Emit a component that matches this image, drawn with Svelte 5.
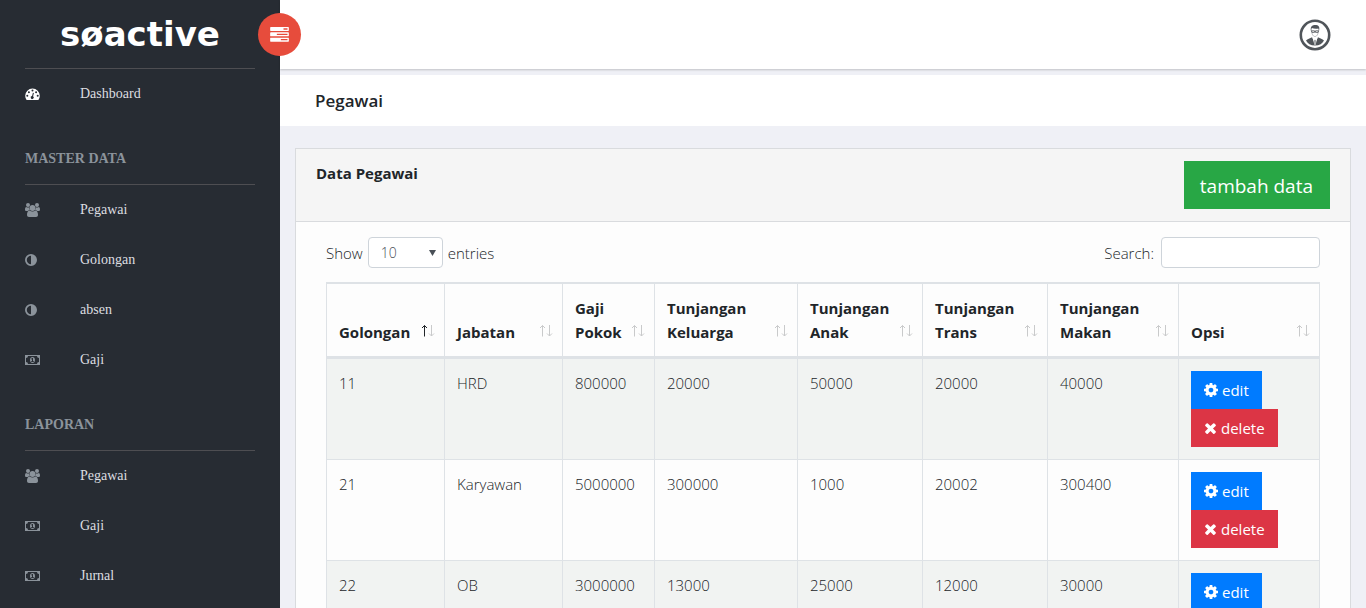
<script>
  const cog =
    'M1152 896q0-106-75-181t-181-75-181 75-75 181 75 181 181 75 181-75 75-181zm512-109v222q0 12-8 23t-20 13l-185 28q-19 54-39 91 35 50 107 138 10 12 10 25t-9 23q-27 37-99 108t-94 71q-12 0-26-9l-138-108q-44 23-91 38-16 136-29 186-7 28-36 28h-222q-14 0-24.5-8.5t-11.5-21.5l-28-184q-49-16-90-37l-141 107q-10 9-25 9-14 0-25-11-126-114-165-168-7-10-7-23 0-12 8-23 15-21 51-66.5t54-70.5q-27-50-41-99l-183-27q-13-2-21-12.5t-8-23.5v-222q0-12 8-23t19-13l186-28q14-46 39-92-40-57-107-138-10-12-10-24 0-10 9-23 26-36 98.5-107.5t94.5-71.5q13 0 26 10l138 107q44-23 91-38 16-136 29-186 7-28 36-28h222q14 0 24.5 8.5t11.5 21.5l28 184q49 16 90 37l142-107q9-9 24-9 13 0 25 10 129 119 165 170 7 8 7 22 0 12-8 23-15 21-51 66.5t-54 70.5q26 50 41 98l183 28q13 2 21 12.5t8 23.5z';
  const times =
    'M1490 1322q0 40-28 68l-136 136q-28 28-68 28t-68-28l-294-294-294 294q-28 28-68 28t-68-28l-136-136q-28-28-28-68t28-68l294-294-294-294q-28-28-28-68t28-68l136-136q28-28 68-28t68 28l294 294 294-294q28-28 68-28t68 28l136 136q28 28 28 68t-28 68l-294 294 294 294q28 28 28 68z';
  const tasks =
    'M1024 1408h640v-128h-640v128zm-384-512h1024v-128h-1024v128zm640-512h384v-128h-384v128zm512 832v256q0 26-19 45t-45 19h-1664q-26 0-45-19t-19-45v-256q0-26 19-45t45-19h1664q26 0 45 19t19 45zm0-512v256q0 26-19 45t-45 19h-1664q-26 0-45-19t-19-45v-256q0-26 19-45t45-19h1664q26 0 45 19t19 45zm0-512v256q0 26-19 45t-45 19h-1664q-26 0-45-19t-19-45v-256q0-26 19-45t45-19h1664q26 0 45 19t19 45z';

  const sections = [
    { title: '', items: [{ icon: 'gauge', label: 'Dashboard' }] },
    {
      title: 'MASTER DATA',
      items: [
        { icon: 'users', label: 'Pegawai' },
        { icon: 'adjust', label: 'Golongan' },
        { icon: 'adjust', label: 'absen' },
        { icon: 'money', label: 'Gaji' }
      ]
    },
    {
      title: 'LAPORAN',
      items: [
        { icon: 'users', label: 'Pegawai' },
        { icon: 'money', label: 'Gaji' },
        { icon: 'money', label: 'Jurnal' }
      ]
    }
  ];

  const columns = [
    { label: 'Golongan', width: 118 },
    { label: 'Jabatan', width: 118 },
    { label: 'Gaji Pokok', width: 92 },
    { label: 'Tunjangan Keluarga', width: 143 },
    { label: 'Tunjangan Anak', width: 125 },
    { label: 'Tunjangan Trans', width: 125 },
    { label: 'Tunjangan Makan', width: 131 },
    { label: 'Opsi', width: 142 }
  ];

  const rows = [
    ['11', 'HRD', '800000', '20000', '50000', '20000', '40000'],
    ['21', 'Karyawan', '5000000', '300000', '1000', '20002', '300400'],
    ['22', 'OB', '3000000', '13000', '25000', '12000', '30000']
  ];

  let sorted = $state(0);
  let pageSize = $state('10');
  let query = $state('');
</script>

{#snippet menuIcon(name)}
  <svg class="menu-icon" viewBox="0 0 16 14" aria-hidden="true">
    {#if name === 'gauge'}
      <path
        fill-rule="evenodd"
        d="M7.500 1.500A7.300 7.300 0 0 1 14.800 8.800c0 1.400-.4 2.500-1.100 3.800-.1.200-.2.300-.4.300H1.700c-.2 0-.3-.1-.4-.3C.6 11.300.2 10.200.2 8.800A7.300 7.300 0 0 1 7.500 1.500zM2.300 7.800a1 1 0 1 0 0 2 1 1 0 0 0 0-2zM3.900 4.200a1 1 0 1 0 0 2 1 1 0 0 0 0-2zM7.500 2.600a1 1 0 1 0 0 2 1 1 0 0 0 0-2zM11.100 4.200a1 1 0 1 0 0 2 1 1 0 0 0 0-2zM12.700 7.800a1 1 0 1 0 0 2 1 1 0 0 0 0-2zM7.900 5.800l-.8 3.200a1.500 1.500 0 1 0 1 .3l.8-3.200z"
      />
    {:else if name === 'users'}
      <circle cx="3" cy="2" r="2" />
      <circle cx="12" cy="2" r="2" />
      <path d="M0 6.500C0 5 .5 4 1.200 4c.6.400 1.200.6 1.800.6.500 0 1-.1 1.400-.3-.2 1.300.1 2 .6 2.700-.8 0-1.700.4-2.200 1H1.500C.6 8 0 7.500 0 6.500zM15 6.500c0-1.500-.5-2.500-1.200-2.500-.6.400-1.200.6-1.800.6-.5 0-1-.1-1.400-.3.2 1.300-.1 2-.6 2.700.8 0 1.700.4 2.200 1h1.300c.9 0 1.500-.5 1.500-1.500z" />
      <circle cx="7.500" cy="5" r="2.900" />
      <path d="M2 11.800C2 9.500 2.800 7.500 4.700 7.500c.8.700 1.800 1.100 2.800 1.100s2-.4 2.800-1.100c1.900 0 2.700 2 2.700 4.300 0 1.400-.8 2.200-2 2.200H4c-1.200 0-2-.8-2-2.200z" />
    {:else if name === 'adjust'}
      <path fill-rule="evenodd" d="M6 1a6 6 0 1 1 0 12A6 6 0 0 1 6 1zm0 1.800a4.200 4.200 0 0 0 0 8.400z" />
    {:else}
      <path
        fill-rule="evenodd"
        d="M0 2h15v10H0zM3 3a2 2 0 0 1-2 2v4a2 2 0 0 1 2 2h9a2 2 0 0 1 2-2V5a2 2 0 0 1-2-2zM7.500 4C9 4 10 5.300 10 7s-1 3-2.500 3S5 8.700 5 7s1-3 2.500-3zM7.100 5 6 6l.5.5.5-.3v2H6V9h3v-.8H8V5z"
      />
    {/if}
  </svg>
{/snippet}

<div class="app">
  <aside class="sidebar">
    <a class="brand" href="#home">søactive</a>
    <nav>
      {#each sections as section}
        {#if section.title}
          <h2>{section.title}</h2>
        {/if}
        <ul>
          {#each section.items as item}
            <li>
              <a href="#{item.label}" class:current={item.icon === 'gauge'}>
                {@render menuIcon(item.icon)}
                <span>{item.label}</span>
              </a>
            </li>
          {/each}
        </ul>
      {/each}
    </nav>
  </aside>

  <div class="main">
    <header class="topbar">
      <button class="toggle" aria-label="Menu">
        <svg viewBox="0 128 1792 1536" aria-hidden="true"><path d={tasks} /></svg>
      </button>
      <button class="avatar" aria-label="Akun">
        <svg viewBox="0 0 32 32" aria-hidden="true">
          <circle cx="16" cy="16" r="14.200" fill="#fff" stroke="#50555a" stroke-width="2.600" />
          <path d="M12 12C11 8 13 6 16 6c3.800 0 5 1.800 4 6l-.7-2.500c-2 .4-4.800.2-6.500-.4z" fill="#50555a" />
          <path d="M12.500 11c.2 4 1.500 6.500 3.500 6.500s3.300-2.500 3.500-6.500" fill="none" stroke="#a0a4a8" stroke-width=".7" />
          <path d="M12.500 11.800h3v1.600h-2.600zM16.500 11.800h3l-.4 1.600h-2.600z" fill="none" stroke="#50555a" stroke-width=".8" />
          <path d="M7 21.500c1.500-1.700 4-2.300 6-3.300l3 5.800 3-5.800c2 1 4.500 1.600 6 3.300-1.500 3-4.500 5-9 5s-7.500-2-9-5z" fill="#50555a" />
          <path d="M13.500 18.500 16 20.500l2.500-2L16.500 26h-1z" fill="#fff" />
          <path d="M16 20.500l.8 1L16.500 26h-1l-.3-4.500z" fill="#858a8e" />
        </svg>
      </button>
    </header>

    <div class="title"><h1>Pegawai</h1></div>

    <section class="card">
      <header class="card-head">
        <strong>Data Pegawai</strong>
        <button class="add">tambah data</button>
      </header>
      <div class="card-body">
        <div class="tools">
          <label>
            Show
            <span class="select">
              <select bind:value={pageSize}>
                <option>10</option>
                <option>25</option>
                <option>50</option>
                <option>100</option>
              </select>
              <svg viewBox="0 0 7 6" aria-hidden="true"><path d="M0 0h7L3.500 6z" /></svg>
            </span>
            entries
          </label>
          <label class="search">
            Search:
            <input type="search" bind:value={query} />
          </label>
        </div>

        <table>
          <colgroup>
            {#each columns as column}
              <col style:width="{column.width}px" />
            {/each}
          </colgroup>
          <thead>
            <tr>
              {#each columns as column, i}
                <th scope="col" aria-sort={sorted === i ? 'ascending' : 'none'}>
                  <button onclick={() => (sorted = i)}>
                    <span>{column.label}</span>
                    <svg class="sort" viewBox="0 0 15 24" aria-hidden="true">
                      <path class:on={sorted === i} d="M4.500 16.500v-11M2 8l2.500-2.500L7 8" />
                      <path d="M11.500 5v11M9 13.500l2.500 2.500 2.500-2.500" />
                    </svg>
                  </button>
                </th>
              {/each}
            </tr>
          </thead>
          <tbody>
            {#each rows as row}
              <tr>
                {#each row as cell}
                  <td>{cell}</td>
                {/each}
                <td>
                  <div class="actions">
                    <button class="edit">
                      <svg width="14" height="14" viewBox="128 128 1536 1536" aria-hidden="true"><path d={cog} /></svg>
                      edit
                    </button>
                    <button class="delete">
                      <svg width="13" height="14" viewBox="183 128 1426 1536" aria-hidden="true"><path d={times} /></svg>
                      delete
                    </button>
                  </div>
                </td>
              </tr>
            {/each}
          </tbody>
        </table>
      </div>
    </section>
  </div>
</div>

<style>
  :global(body) {
    margin: 0;
    background: #eff0f6;
  }

  .app {
    display: flex;
    height: 100vh;
    overflow: hidden;
    font: 350 15px/24px 'Open Sans', 'Noto Sans', sans-serif;
    color: #212529;
  }

  .app :is(button, input, select) {
    font: inherit;
    color: inherit;
    margin: 0;
    box-sizing: border-box;
  }

  button {
    border: 0;
    padding: 0;
    background: none;
    cursor: pointer;
  }

  svg {
    display: block;
    flex: none;
  }

  .sidebar {
    flex: 0 0 280px;
    box-sizing: border-box;
    padding: 0 25px;
    background: #272c33;
    font: 14px/22px 'Liberation Serif', 'Times New Roman', serif;
  }

  .brand {
    display: block;
    border-bottom: 1px solid #4e4e52;
    font: bold 34px/68px 'DejaVu Sans', sans-serif;
    text-align: center;
    color: #fff;
    text-decoration: none;
  }

  h2 {
    margin: 0;
    padding: 29px 0 14px;
    border-bottom: 1px solid #4e4e52;
    font: bold 14px/22px 'Liberation Serif', 'Times New Roman', serif;
    color: #8b939b;
  }

  ul {
    margin: 0;
    padding: 0;
    list-style: none;
  }

  li a {
    display: flex;
    align-items: center;
    gap: 39px;
    height: 50px;
    color: #dcdee0;
    text-decoration: none;
  }

  .menu-icon {
    width: 16px;
    height: 14px;
    fill: #8b939b;
  }

  .current .menu-icon {
    fill: #fff;
  }

  .main {
    flex: 1;
    min-width: 0;
  }

  .topbar {
    position: relative;
    display: flex;
    align-items: center;
    justify-content: flex-end;
    height: 69px;
    padding: 0 35px;
    background: #fff;
    box-shadow: 0 1px 2px rgba(0, 0, 0, 0.2);
  }

  .toggle {
    position: absolute;
    left: -22px;
    top: 13px;
    display: grid;
    place-items: center;
    width: 43px;
    height: 43px;
    border-radius: 50%;
    background: #e74c3c;
  }

  .toggle svg {
    width: 19px;
    height: 16px;
    fill: #fff;
  }

  .avatar svg {
    width: 32px;
    height: 32px;
  }

  .title {
    margin: 6px 0 22px;
    padding: 14px 35px 13px;
    background: #fff;
  }

  h1 {
    margin: 0;
    font-size: 17px;
    line-height: 24px;
    font-weight: 600;
  }

  .card {
    margin: 0 15px;
    border: 1px solid #d9dbde;
    background: #fdfdfd;
  }

  .card-head {
    display: flex;
    justify-content: space-between;
    align-items: flex-start;
    padding: 12px 20px;
    border-bottom: 1px solid #d9dbde;
    background: #f5f5f5;
  }

  strong {
    font-weight: 700;
  }

  .card-head .add {
    padding: 10px 17px 8px 16px;
    background: #28a745;
    font-size: 19px;
    line-height: 30px;
    font-weight: 400;
    color: #fff;
  }

  .card-body {
    padding: 15px 30px;
  }

  .tools {
    display: flex;
    justify-content: space-between;
    margin-bottom: 14px;
  }

  label {
    display: flex;
    align-items: center;
    gap: 5px;
  }

  .select {
    display: grid;
    align-items: center;
  }

  .select > * {
    grid-area: 1 / 1;
  }

  .select svg {
    justify-self: end;
    width: 7px;
    height: 6px;
    margin-right: 7px;
    fill: #495057;
    pointer-events: none;
  }

  .app select,
  .app input {
    height: 31px;
    border: 1px solid #ced4da;
    border-radius: 4px;
    background: #fff;
  }

  .app select {
    width: 75px;
    padding: 0 12px;
    appearance: none;
    font-size: 14px;
    color: #495057;
  }

  .search {
    gap: 7px;
  }

  .app input {
    width: 159px;
    padding: 0 8px;
    font-size: 14px;
  }

  table {
    width: 100%;
    table-layout: fixed;
    border-collapse: separate;
    border-spacing: 0;
    border-top: 1px solid #dee2e6;
  }

  th,
  td {
    padding: 12px;
    border: solid #dee2e6;
    border-width: 1px 0 0 1px;
    text-align: left;
    vertical-align: top;
  }

  th {
    padding-right: 9px;
    border-bottom-width: 2px;
    vertical-align: bottom;
  }

  th:last-child,
  td:last-child {
    border-right-width: 1px;
  }

  th button {
    display: flex;
    align-items: flex-end;
    justify-content: space-between;
    width: 100%;
    text-align: left;
  }

  .app th button {
    font-weight: 700;
  }

  .sort {
    width: 15px;
    height: 24px;
    fill: none;
    stroke: #c9cacb;
  }

  .sort .on {
    stroke: #212529;
  }

  tbody tr:nth-child(odd) td {
    background: #f1f3f2;
  }

  .actions {
    display: flex;
    flex-direction: column;
    align-items: flex-start;
  }

  .app .actions button {
    display: flex;
    align-items: center;
    gap: 4px;
    padding: 7px 13px;
    font-weight: 400;
    color: #fff;
    fill: #fff;
  }

  .app .actions .edit {
    background: #007bff;
  }

  .app .actions .delete {
    background: #dc3545;
  }
</style>
